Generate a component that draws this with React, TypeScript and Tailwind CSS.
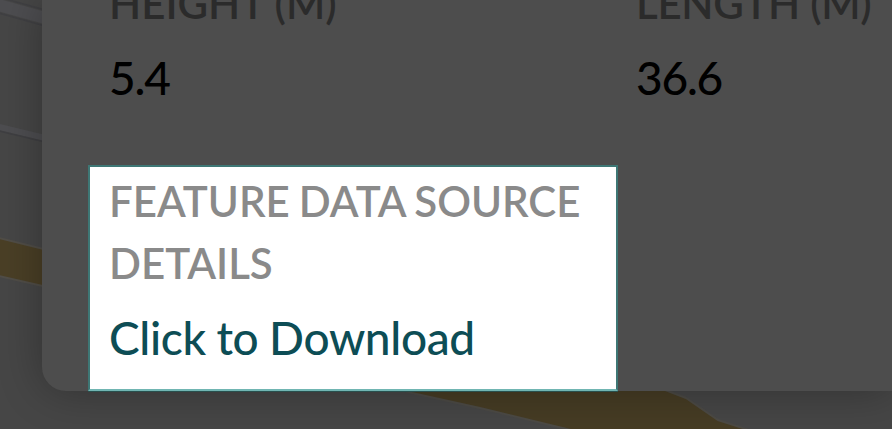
type FieldProps = { label: string; value: string; className?: string };

function Field({ label, value, className = '' }: FieldProps) {
  return (
    <div className={`flex flex-col gap-[10px] whitespace-nowrap ${className}`}>
      <div className="text-[42px] leading-[62px] font-semibold text-[#2b2b2b]">{label}</div>
      <div className="text-[46px] leading-[68px] font-medium tracking-[-1.2px] text-black">{value}</div>
    </div>
  );
}

function MapBackground() {
  return (
    <svg className="absolute inset-0" width="892" height="429" viewBox="0 0 892 429" fill="none">
      <rect width="892" height="429" fill="#464646" />
      <path d="M-5 4 L45 18" stroke="#4d4d50" strokeWidth="12" />
      <path d="M-5 -4 L45 10 M-5 12 L45 26" stroke="#404043" strokeWidth="1.5" />
      <path d="M-5 126 L45 138" stroke="#4d4d50" strokeWidth="6" />
      <path d="M-5 130 L45 142" stroke="#3f3f42" strokeWidth="1.5" />
      <path
        d="M-5 237 L60 253 V290 L-5 275 Z"
        fill="#4a3f26"
        stroke="#504d47"
        strokeWidth="2"
      />
      <path
        d="M390 386 L412 393 L480 408 L575 431 H752 L718 420 L686 398 L655 386 Z"
        fill="#463c24"
        stroke="#4c4a45"
        strokeWidth="2"
      />
    </svg>
  );
}

export default function App() {
  return (
    <div className="relative h-[429px] w-[892px] overflow-hidden bg-[#464646] font-['Lato',sans-serif]">
      <MapBackground />
      <div className="relative ml-[42px] h-[391px] rounded-bl-[24px] bg-[#4d4d4d] shadow-[0_0_44px_rgba(0,0,0,0.3)]">
        <div className="flex h-full flex-col justify-end pl-[46px]">
          <div className="mb-[53px] flex">
            <Field label="HEIGHT (M)" value="5.4" className="w-[527px] pl-[21px]" />
            <Field label="LENGTH (M)" value="36.6" className="pl-[21px] tracking-[-0.3px]" />
          </div>
          <div className="flex h-[226px] w-[530px] shrink-0 flex-col gap-[10px] border-2 border-[#3e7775] border-b-[#70b5b2] bg-white pt-[3px] pl-[19px] shadow-[0_1px_0_#294f4d]">
            <div className="text-[42px] leading-[62px] font-semibold whitespace-nowrap text-[#8a8a8a] [word-spacing:-1.4px]">
              FEATURE DATA SOURCE
              <br />
              DETAILS
            </div>
            <a className="text-[46px] leading-[68px] font-medium tracking-[-0.35px] whitespace-nowrap text-[#0d4d55] [word-spacing:-0.6px]">
              Click to Download
            </a>
          </div>
        </div>
      </div>
    </div>
  );
}
